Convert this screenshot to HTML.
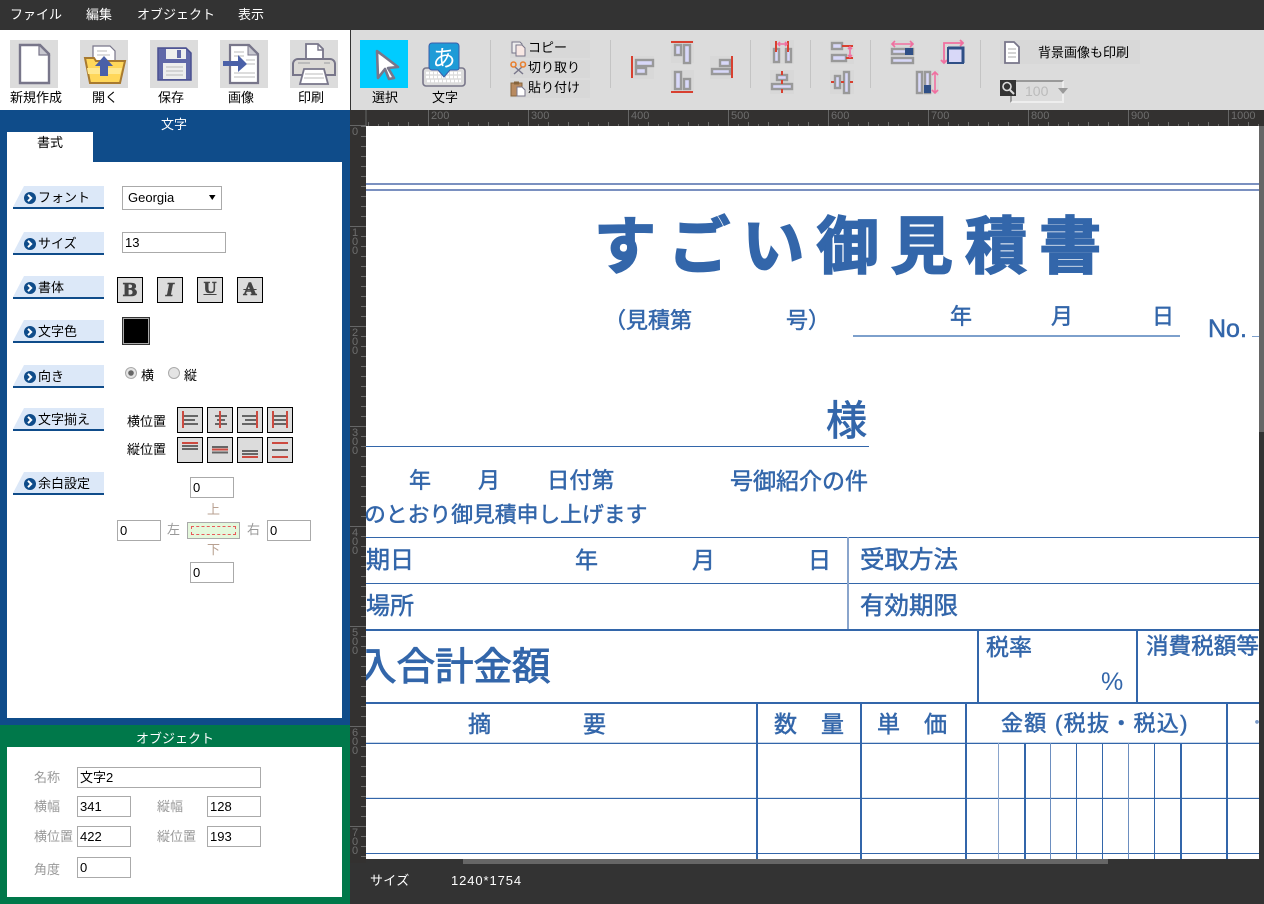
<!DOCTYPE html>
<html lang="ja"><head><meta charset="utf-8"><title>Editor</title>
<style>
html,body{margin:0;padding:0;width:1264px;height:904px;overflow:hidden;background:#333;font-family:"Liberation Sans","Noto Sans CJK JP",sans-serif;font-size:13px;color:#000}
div,span{position:absolute;box-sizing:border-box}
.t{white-space:nowrap;line-height:18px}
.w{color:#fff}
.g{color:#999}
.c{transform:translateX(-50%)}
.sec{left:13px;width:91px;height:23px;background:#dce8f8;border-bottom:2px solid #0f4c8a;clip-path:polygon(11px 0,100% 0,100% 100%,0 100%,0 21px)}
.lab{left:38px}
.in{background:#fff;border:1px solid #aaa;height:21px;padding-left:2px;line-height:19px;font-size:13px;color:#000;white-space:nowrap}
.btn{background:#dcdcdc;border:1px solid #000;width:26px;height:26px}
.gb{background:#dcdcdc}
.d{position:absolute;white-space:nowrap;color:#3366aa;line-height:1;-webkit-text-stroke:.5px #3366aa}
.hl,.vl{background:#3366aa}
svg{position:absolute;left:0;top:0}
</style></head><body>

<div style="left:0;top:0;width:1264px;height:30px;background:#333"></div>
<div class="t w" style="left:10px;top:6px">ファイル</div>
<div class="t w" style="left:86px;top:6px">編集</div>
<div class="t w" style="left:137px;top:6px">オブジェクト</div>
<div class="t w" style="left:238px;top:6px">表示</div>

<div style="left:0;top:30px;width:350px;height:80px;background:#fff"></div>
<div class="gb" style="left:10px;top:40px;width:48px;height:48px"></div>
<div class="gb" style="left:80px;top:40px;width:48px;height:48px"></div>
<div class="gb" style="left:150px;top:40px;width:48px;height:48px"></div>
<div class="gb" style="left:220px;top:40px;width:48px;height:48px"></div>
<div class="gb" style="left:290px;top:40px;width:48px;height:48px"></div>
<div class="t" style="left:10px;top:89px">新規作成</div>
<div class="t" style="left:92px;top:89px">開く</div>
<div class="t" style="left:158px;top:89px">保存</div>
<div class="t" style="left:228px;top:89px">画像</div>
<div class="t" style="left:298px;top:89px">印刷</div>

<div style="left:350px;top:30px;width:914px;height:80px;background:#dcdcdc;border-left:1px solid #333"></div>
<div style="left:360px;top:40px;width:48px;height:48px;background:#00ccff"></div>
<div class="t" style="left:372px;top:89px">選択</div>
<div class="t" style="left:432px;top:89px">文字</div>
<div style="left:510px;top:40px;width:80px;height:18px;background:#d8d8d8"></div>
<div style="left:510px;top:60px;width:80px;height:18px;background:#d8d8d8"></div>
<div style="left:510px;top:80px;width:80px;height:18px;background:#d8d8d8"></div>
<div class="t" style="left:528px;top:39px">コピー</div>
<div class="t" style="left:528px;top:59px">切り取り</div>
<div class="t" style="left:528px;top:79px">貼り付け</div>
<div style="left:1000px;top:40px;width:140px;height:24px;background:#d8d8d8"></div>
<div class="t" style="left:1038px;top:44px">背景画像も印刷</div>
<div style="left:1010px;top:80px;width:54px;height:23px;border:2px solid;border-color:#999 #eee #eee #999"></div>
<div class="t" style="left:1025px;top:82px;font-size:14px;color:#bbb">100</div>

<div style="left:0;top:110px;width:350px;height:615px;background:#0f4c8a"></div>
<div class="t w c" style="left:174px;top:116px">文字</div>
<div style="left:7px;top:132px;width:86px;height:31px;background:#fff"></div>
<div class="t" style="left:37px;top:134px">書式</div>
<div style="left:7px;top:162px;width:335px;height:556px;background:#fff"></div>

<div class="sec" style="top:186px"></div><div class="t lab" style="top:189px">フォント</div>
<div class="sec" style="top:232px"></div><div class="t lab" style="top:235px">サイズ</div>
<div class="sec" style="top:276px"></div><div class="t lab" style="top:279px">書体</div>
<div class="sec" style="top:320px"></div><div class="t lab" style="top:323px">文字色</div>
<div class="sec" style="top:365px"></div><div class="t lab" style="top:368px">向き</div>
<div class="sec" style="top:408px"></div><div class="t lab" style="top:411px">文字揃え</div>
<div class="sec" style="top:472px"></div><div class="t lab" style="top:475px">余白設定</div>

<div class="in" style="left:122px;top:186px;width:100px;height:24px;line-height:22px;padding-left:5px">Georgia</div>
<div class="in" style="left:122px;top:232px;width:104px">13</div>

<div class="btn" style="left:117px;top:277px;text-align:center;font:bold 18px/25px 'DejaVu Serif',serif;color:#444;-webkit-text-stroke:.6px #444">B</div>
<div class="btn" style="left:157px;top:277px;text-align:center;font:italic bold 18px/25px 'DejaVu Serif',serif;color:#444;-webkit-text-stroke:.5px #444">I</div>
<div class="btn" style="left:197px;top:277px;text-align:center;font:bold 15px/21px 'DejaVu Serif',serif;color:#444;-webkit-text-stroke:.5px #444"><span style="position:static;text-decoration:underline">U</span></div>
<div class="btn" style="left:237px;top:277px;text-align:center;font:bold 17px/24px 'DejaVu Serif',serif;color:#444;-webkit-text-stroke:.6px #444"><span style="position:static;text-decoration:line-through">A</span></div>
<div style="left:122px;top:317px;width:28px;height:28px;background:#000;border:1px solid #333;outline:1px solid #aaa;outline-offset:-2px"></div>
<div class="t" style="left:141px;top:367px">横</div>
<div class="t" style="left:184px;top:367px">縦</div>

<div class="t" style="left:127px;top:413px;font-size:13px">横位置</div>
<div class="t" style="left:127px;top:441px;font-size:13px">縦位置</div>
<div class="btn" style="left:177px;top:407px"></div><div class="btn" style="left:207px;top:407px"></div><div class="btn" style="left:237px;top:407px"></div><div class="btn" style="left:267px;top:407px"></div>
<div class="btn" style="left:177px;top:437px"></div><div class="btn" style="left:207px;top:437px"></div><div class="btn" style="left:237px;top:437px"></div><div class="btn" style="left:267px;top:437px"></div>

<div class="in" style="left:190px;top:477px;width:44px">0</div>
<div class="in" style="left:117px;top:520px;width:44px">0</div>
<div class="in" style="left:267px;top:520px;width:44px">0</div>
<div class="in" style="left:190px;top:562px;width:44px">0</div>
<div class="t" style="left:207px;top:501px;color:#b8a090">上</div>
<div class="t" style="left:207px;top:541px;color:#b8a090">下</div>
<div class="t g" style="left:167px;top:521px">左</div>
<div class="t g" style="left:247px;top:521px">右</div>
<div style="left:187px;top:522px;width:53px;height:17px;background:#e4f8dc;border:1px solid #aaa"></div>
<div style="left:191px;top:526px;width:45px;height:9px;border:1px dashed #e85a5a"></div>

<div style="left:0;top:725px;width:350px;height:179px;background:#00784a"></div>
<div class="t w c" style="left:175px;top:730px">オブジェクト</div>
<div style="left:7px;top:747px;width:335px;height:150px;background:#fff"></div>
<div class="t g" style="left:34px;top:769px">名称</div>
<div class="t g" style="left:34px;top:798px">横幅</div>
<div class="t g" style="left:34px;top:828px">横位置</div>
<div class="t g" style="left:34px;top:861px">角度</div>
<div class="t g" style="left:157px;top:798px">縦幅</div>
<div class="t g" style="left:157px;top:828px">縦位置</div>
<div class="in" style="left:77px;top:767px;width:184px">文字2</div>
<div class="in" style="left:77px;top:796px;width:54px">341</div>
<div class="in" style="left:207px;top:796px;width:54px">128</div>
<div class="in" style="left:77px;top:826px;width:54px">422</div>
<div class="in" style="left:207px;top:826px;width:54px">193</div>
<div class="in" style="left:77px;top:857px;width:54px">0</div>

<div style="left:350px;top:110px;width:914px;height:16px;background:#333130"></div>
<div style="left:350px;top:126px;width:16px;height:738px;background:#333130"></div>
<div style="left:350px;top:863px;width:914px;height:41px;background:#333"></div>
<div class="t w" style="left:370px;top:872px;letter-spacing:.3px">サイズ</div>
<div class="t w" style="left:451px;top:872px;letter-spacing:.9px">1240*1754</div>

<div style="left:366px;top:126px;width:893px;height:733px;background:#fff;overflow:hidden">
<div style="left:-366px;top:-126px;width:1264px;height:904px">
 <div class="hl" style="left:366px;top:183px;width:900px;height:2px;background:#7a90c0"></div>
 <div class="hl" style="left:366px;top:189px;width:900px;height:2px;background:#7a90c0"></div>

 <div class="d" style="left:594px;top:217px;font-size:62px;font-weight:700;letter-spacing:12.2px;-webkit-text-stroke:1.8px #3366aa">すごい御見積書</div>

 <div class="d" style="left:604px;top:310px;font-size:22px">（見積第</div>
 <div class="d" style="left:786px;top:310px;font-size:22px">号）</div>
 <div class="d" style="left:950px;top:306px;font-size:22px">年</div>
 <div class="d" style="left:1051px;top:306px;font-size:22px">月</div>
 <div class="d" style="left:1152px;top:306px;font-size:22px">日</div>
 <div style="left:853px;top:335px;width:327px;height:2px;background:#7da0cc"></div>
 <div class="d" style="left:1208px;top:317px;font-size:25px">No.</div>
 <div style="left:1252px;top:336px;width:10px;height:1px;background:#7da0cc"></div>

 <div class="d" style="left:826px;top:401px;font-size:41px;-webkit-text-stroke:.9px #3366aa">様</div>
 <div class="hl" style="left:366px;top:446px;width:503px;height:1px"></div>
 <div class="d" style="left:409px;top:470px;font-size:22px">年</div>
 <div class="d" style="left:478px;top:470px;font-size:22px">月</div>
 <div class="d" style="left:547px;top:470px;font-size:22.4px">日付第</div>
 <div class="d" style="left:730px;top:470px;font-size:23px">号御紹介の件</div>
 <div class="d" style="left:364px;top:504px;font-size:21.8px">のとおり御見積申し上げます</div>

 <div class="hl" style="left:366px;top:537px;width:900px;height:1px"></div>
 <div class="hl" style="left:366px;top:583px;width:900px;height:1px"></div>
 <div class="hl" style="left:366px;top:629px;width:900px;height:2px"></div>
 <div class="vl" style="left:847px;top:537px;width:2px;height:92px;background:#8aa5cc"></div>
 <div class="d" style="left:366px;top:549px;font-size:24px">期日</div>
 <div class="d" style="left:575px;top:549px;font-size:23px">年</div>
 <div class="d" style="left:692px;top:549px;font-size:23px">月</div>
 <div class="d" style="left:808px;top:549px;font-size:23px">日</div>
 <div class="d" style="left:860px;top:549px;font-size:24.5px">受取方法</div>
 <div class="d" style="left:366px;top:595px;font-size:24px">場所</div>
 <div class="d" style="left:860px;top:595px;font-size:24.5px">有効期限</div>

 <div class="d" style="left:358px;top:649px;font-size:38.5px;-webkit-text-stroke:1px #3366aa">入合計金額</div>
 <div class="vl" style="left:977px;top:629px;width:2px;height:74px"></div>
 <div class="vl" style="left:1136px;top:629px;width:2px;height:74px"></div>
 <div class="d" style="left:986px;top:636px;font-size:23px">税率</div>
 <div class="d" style="left:1146px;top:636px;font-size:22.6px">消費税額等</div>
 <div class="d" style="left:1101px;top:670px;font-size:25px;-webkit-text-stroke:0">%</div>

 <div class="hl" style="left:366px;top:702px;width:900px;height:2px"></div>
 <div class="hl" style="left:366px;top:743px;width:900px;height:1px;box-shadow:0 -1px 0 #c8d6e8"></div>
 <div class="hl" style="left:366px;top:798px;width:900px;height:1px;box-shadow:0 -1px 0 #dde6f0"></div>
 <div class="hl" style="left:366px;top:853px;width:900px;height:1px"></div>
 <div class="d" style="left:468px;top:713px;font-size:23px">摘</div>
 <div class="d" style="left:583px;top:713px;font-size:23px">要</div>
 <div class="d" style="left:774px;top:713px;font-size:23px">数</div>
 <div class="d" style="left:821px;top:713px;font-size:23px">量</div>
 <div class="d" style="left:877px;top:713px;font-size:23px">単</div>
 <div class="d" style="left:924px;top:713px;font-size:23px">価</div>
 <div class="d" style="left:1001px;top:713px;font-size:22px;letter-spacing:1.3px">金額 (税抜・税込)</div>
 <div class="d" style="left:1248px;top:714px;font-size:18px;-webkit-text-stroke:0;color:#7a9ac8">・</div>
 <div class="vl" style="left:756px;top:703px;width:2px;height:156px"></div>
 <div class="vl" style="left:860px;top:703px;width:2px;height:156px"></div>
 <div class="vl" style="left:965px;top:703px;width:2px;height:156px"></div>
 <div class="vl" style="left:1226px;top:703px;width:2px;height:156px"></div>
 <div style="left:998px;top:743px;width:1px;height:116px;background:#8aa5cc"></div>
 <div class="vl" style="left:1024px;top:743px;width:2px;height:116px"></div>
 <div style="left:1050px;top:743px;width:1px;height:116px;background:#6d8fc0"></div>
 <div style="left:1076px;top:743px;width:1px;height:116px;background:#3366aa"></div>
 <div style="left:1102px;top:743px;width:1px;height:116px;background:#3366aa"></div>
 <div style="left:1128px;top:743px;width:1px;height:116px;background:#6d8fc0"></div>
 <div style="left:1154px;top:743px;width:1px;height:116px;background:#3366aa"></div>
 <div class="vl" style="left:1180px;top:743px;width:2px;height:116px"></div>
</div></div>

<div style="left:366px;top:859px;width:898px;height:5px;background:#333"></div>
<div style="left:463px;top:859px;width:645px;height:5px;background:#666"></div>
<div style="left:1259px;top:126px;width:5px;height:738px;background:#333"></div>
<div style="left:1259px;top:126px;width:5px;height:306px;background:#666"></div>

<div style="left:1000px;top:80px;width:16px;height:16px;background:#333"></div>

<svg width="1264" height="904" viewBox="0 0 1264 904" style="pointer-events:none">
<defs>
 <pattern id="hr" x="368" y="0" width="20" height="904" patternUnits="userSpaceOnUse">
  <rect x="0" y="122" width="1" height="4" fill="#6a6a6a"/><rect x="10" y="124" width="1" height="2" fill="#6a6a6a"/>
 </pattern>
 <pattern id="vr" x="0" y="136" width="904" height="20" patternUnits="userSpaceOnUse">
  <rect x="361" y="0" width="5" height="1" fill="#6a6a6a"/><rect x="361" y="10" width="5" height="1" fill="#6a6a6a"/>
 </pattern>
 <g id="cc"><circle cx="0" cy="0" r="6" fill="#0f4c8a"/><path d="M-2-3.2 1.2 0-2 3.2" fill="none" stroke="#fff" stroke-width="2"/></g>
</defs>

<rect x="366" y="116" width="893" height="10" fill="url(#hr)"/>
<rect x="350" y="126" width="16" height="733" fill="url(#vr)"/>
<g stroke="#666" stroke-width="1">
 <path d="M428.5 110v16M528.5 110v16M628.5 110v16M728.5 110v16M828.5 110v16M928.5 110v16M1028.5 110v16M1128.5 110v16M1228.5 110v16"/>
 <path d="M350 226.5h16M350 326.5h16M350 426.5h16M350 526.5h16M350 626.5h16M350 726.5h16M350 826.5h16M350 125.5h16M366 110v16"/>
</g>
<g fill="#6e6e6e" font-family="'Liberation Sans',sans-serif" font-size="11">
 <text x="431" y="119">200</text><text x="531" y="119">300</text><text x="631" y="119">400</text><text x="731" y="119">500</text><text x="831" y="119">600</text><text x="931" y="119">700</text><text x="1031" y="119">800</text><text x="1131" y="119">900</text><text x="1231" y="119">1000</text>
 <text x="352" y="135">0</text>
 <text x="352" y="236">1</text><text x="352" y="245">0</text><text x="352" y="254">0</text>
 <text x="352" y="336">2</text><text x="352" y="345">0</text><text x="352" y="354">0</text>
 <text x="352" y="436">3</text><text x="352" y="445">0</text><text x="352" y="454">0</text>
 <text x="352" y="536">4</text><text x="352" y="545">0</text><text x="352" y="554">0</text>
 <text x="352" y="636">5</text><text x="352" y="645">0</text><text x="352" y="654">0</text>
 <text x="352" y="736">6</text><text x="352" y="745">0</text><text x="352" y="754">0</text>
 <text x="352" y="836">7</text><text x="352" y="845">0</text><text x="352" y="854">0</text>
</g>

<!-- new -->
<path d="M20 45H40L49 54V83H20Z" fill="#fff" stroke="#78768a" stroke-width="2.4"/><path d="M39 45V55H49Z" fill="#c8c8d0" stroke="#78768a" stroke-width="1.2"/>
<!-- open -->
<path d="M93 46h17l5 5v20H93Z" fill="#fff" stroke="#78768a" stroke-width="1.2"/><path d="M97 51h10M97 55h13" stroke="#bbb" stroke-width="1"/>
<path d="M85 58h9l2 3h29l-5 22H90Z" fill="#ffd75a" stroke="#a87a30" stroke-width="2"/><path d="M87 68h35l-2 6H88Z" fill="#ffe890"/>
<path d="M104 56l9 10h-5v10h-8V66h-5Z" fill="#4a60a8"/>
<!-- save -->
<path d="M158 48h28l5 5v27h-33Z" fill="#6068a8" stroke="#4a5090" stroke-width="1.5"/><rect x="166" y="49" width="20" height="10" fill="#eee"/><rect x="177" y="50" width="4" height="8" fill="#6068a8"/><rect x="163" y="63" width="23" height="16" fill="#eee"/><path d="M166 67h17M166 71h17M166 75h17" stroke="#bbb" stroke-width="1"/>
<!-- image -->
<path d="M230 45H249L258 54V83H230Z" fill="#fff" stroke="#78768a" stroke-width="2.2"/><path d="M248 45V55H258Z" fill="#c8c8d0" stroke="#78768a" stroke-width="1"/>
<path d="M234 52h10M234 56h10M246 60h9M246 64h9M234 73h21M234 77h21" stroke="#bbb" stroke-width="1"/>
<path d="M223 61h15v-6l9 9-9 8v-6h-15Z" fill="#4a60a8"/>
<!-- print -->
<path d="M306 44h12l5 5v12h-17Z" fill="#fff" stroke="#78768a" stroke-width="1.8"/><path d="M318 44v6h5" fill="none" stroke="#78768a" stroke-width="1.4"/>
<path d="M298 59h32a5 5 0 0 1 5 5v11h-42V64a5 5 0 0 1 5-5Z" fill="#dcdad6" stroke="#78768a" stroke-width="2"/>
<path d="M298 63h12M324 63h6" stroke="#bbb" stroke-width="2"/>
<path d="M304 69h20l4 15h-28Z" fill="#fff" stroke="#78768a" stroke-width="1.8"/><path d="M305 74h18M304 78h20" stroke="#bbb" stroke-width="1"/>

<!-- cursor -->
<path d="M377 51 398 67 388 68 394 78 389 79 385 69 378 78Z" fill="#fff" stroke="#78768a" stroke-width="2.6" stroke-linejoin="round"/>
<!-- text icon -->
<rect x="423" y="68" width="42" height="18" rx="3" fill="#dcdcdc" stroke="#78768a" stroke-width="1.6"/>
<path d="M426 73h36M426 77h36M427 81h34" stroke="#fff" stroke-width="2.4" stroke-dasharray="3 1"/>
<path d="M432 43h24a3 3 0 0 1 3 3v22a2 2 0 0 1-2 2H450l-6 7-6-7H432a3 3 0 0 1-3-3V46a3 3 0 0 1 3-3Z" fill="#1e9bd7" stroke="#3c5ca8" stroke-width="1"/>
<text x="444" y="66" text-anchor="middle" fill="#fff" font-family="'Noto Sans CJK JP',sans-serif" font-size="23">あ</text>

<!-- separators -->
<path d="M490.5 40v48M610.5 40v48M750.5 40v48M810.5 40v48M870.5 40v48M980.5 40v48" stroke="#c4c4c4" stroke-width="1"/>

<!-- copy cut paste -->
<path d="M512 42h8l2 2v9h-10Z" fill="#eee" stroke="#78768a"/><path d="M516 45h6l3 3v8h-9Z" fill="#f8e8e4" stroke="#78768a"/>
<path d="M515 67 523 74M522 67 514 74" stroke="#78768a" stroke-width="1.4"/><circle cx="513.5" cy="64.5" r="2.5" fill="none" stroke="#e88030" stroke-width="1.6"/><circle cx="523" cy="64.5" r="2.5" fill="none" stroke="#e88030" stroke-width="1.6"/>
<rect x="511" y="83" width="11" height="13" fill="#b88a60" stroke="#86643c"/><rect x="514" y="81.500" width="5" height="3" fill="#86643c"/><path d="M517 87h5l3 3v6h-8Z" fill="#fff" stroke="#78768a"/>

<!-- align button backgrounds -->
<g fill="#d8d8d8">
 <rect x="631" y="56" width="23" height="23"/><rect x="671" y="40" width="23" height="23"/><rect x="671" y="70" width="23" height="23"/><rect x="710" y="56" width="23" height="23"/>
 <rect x="770" y="40" width="24" height="24"/><rect x="770" y="70" width="24" height="24"/><rect x="830" y="40" width="24" height="24"/><rect x="830" y="70" width="24" height="24"/>
 <rect x="890" y="40" width="24" height="24"/><rect x="940" y="40" width="24" height="24"/><rect x="915" y="70" width="24" height="24"/>
</g>
<!-- align -->
<g fill="#d8d8f8" stroke="#999" stroke-width="2.4">
 <rect x="636" y="60" width="17" height="6"/><rect x="636" y="68" width="10" height="6"/>
 <rect x="675" y="45" width="6" height="10"/><rect x="684" y="45" width="6" height="18"/>
 <rect x="675" y="72" width="6" height="17"/><rect x="684" y="79" width="6" height="10"/>
 <rect x="712" y="69" width="18" height="5"/><rect x="720" y="60" width="10" height="6"/>
 <rect x="774" y="49" width="5" height="13"/><rect x="786" y="49" width="5" height="13"/>
 <rect x="777" y="75" width="10" height="5"/><rect x="772" y="84" width="20" height="5"/>
 <rect x="832" y="43" width="10" height="6"/><rect x="832" y="55" width="14" height="6"/>
 <rect x="835" y="76" width="5" height="12"/><rect x="844" y="72" width="5" height="21"/>
 <rect x="892" y="49" width="21" height="5"/><rect x="892" y="58" width="21" height="5"/>
 <rect x="917" y="72" width="5" height="21"/><rect x="925" y="72" width="5" height="21"/>
</g>
<rect x="905" y="48" width="8" height="7" fill="#2f4f86"/>
<rect x="924" y="85" width="7" height="8" fill="#2f4f86"/>
<g stroke="#d84030" stroke-width="2" fill="none">
 <path d="M632 56v22M671 42h22M671 92h22M732 56v22M776 41v11M788 41v11M782 71v4M782 80v4M782 89v4M842 46h11M846 58h7M831 82h3M841 82h3M850 82h3"/>
</g>
<g stroke="#f070a0" stroke-width="1.6" fill="none">
 <path d="M778 44h9M780 42l-2 2 2 2M785 42l2 2-2 2"/>
 <path d="M850 47v10M848 49l2-2 2 2M848 55l2 2 2-2"/>
 <path d="M892 44h21M895 41l-3 3 3 3M910 41l3 3-3 3"/>
 <path d="M935 72v21M932 75l3-3 3 3M932 90l3 3 3-3"/>
 <path d="M963 43H944V63M960 40l3 3-3 3M941 60l3 3 3-3" stroke-width="1.8"/>
</g>
<rect x="948" y="48" width="15" height="15" fill="#d8d8f8" stroke="#2f4f86" stroke-width="2"/>
<path d="M948 48h15v15" fill="none" stroke="#2f4f86" stroke-width="3"/>

<!-- bg page -->
<path d="M1005 42H1014L1019 47V63H1005Z" fill="#fff" stroke="#78768a" stroke-width="1.8"/><path d="M1008 49h8M1008 53h8M1008 57h8" stroke="#aaa"/>
<!-- zoom -->
<circle cx="1007" cy="86.500" r="4" fill="none" stroke="#ddd" stroke-width="1.6"/><path d="M1010 90l4 4" stroke="#ddd" stroke-width="2"/>
<path d="M1058 88h10l-5 6Z" fill="#999"/>

<!-- section bullets -->
<use href="#cc" x="30" y="198"/><use href="#cc" x="30" y="244"/><use href="#cc" x="30" y="288"/><use href="#cc" x="30" y="332"/><use href="#cc" x="30" y="377"/><use href="#cc" x="30" y="420"/><use href="#cc" x="30" y="484"/>

<!-- select arrow -->
<path d="M209 195h6.500l-3.250 5Z" fill="#000"/>
<!-- radios -->
<circle cx="131" cy="373" r="5.500" fill="#e4e4e4" stroke="#aaa"/><circle cx="131" cy="373" r="2.800" fill="#666"/>
<circle cx="174" cy="373" r="5.500" fill="#e4e4e4" stroke="#aaa"/>

<!-- align buttons -->
<g stroke="#666" stroke-width="2">
 <path d="M183 416h15M183 420h12M183 424h15"/>
 <path d="M215 416h12M217 420h8M215 424h12"/>
 <path d="M242 416h15M245 420h12M242 424h15"/>
 <path d="M273 416h14M273 420h14M273 424h14"/>
 <path d="M182 446h16M182 449h16"/>
 <path d="M212 447h16M212 452.500h16"/>
 <path d="M242 451h16M242 454h16"/>
 <path d="M272 450h16"/>
</g>
<g stroke="#cc4a40" stroke-width="2">
 <path d="M183 411v17M220 411v17M257 411v17M273 411v17M287 411v17"/>
 <path d="M182 443h16M212 449.500h16M242 457h16M272 443h16M272 457h16"/>
</g>
</svg>
</body></html>
